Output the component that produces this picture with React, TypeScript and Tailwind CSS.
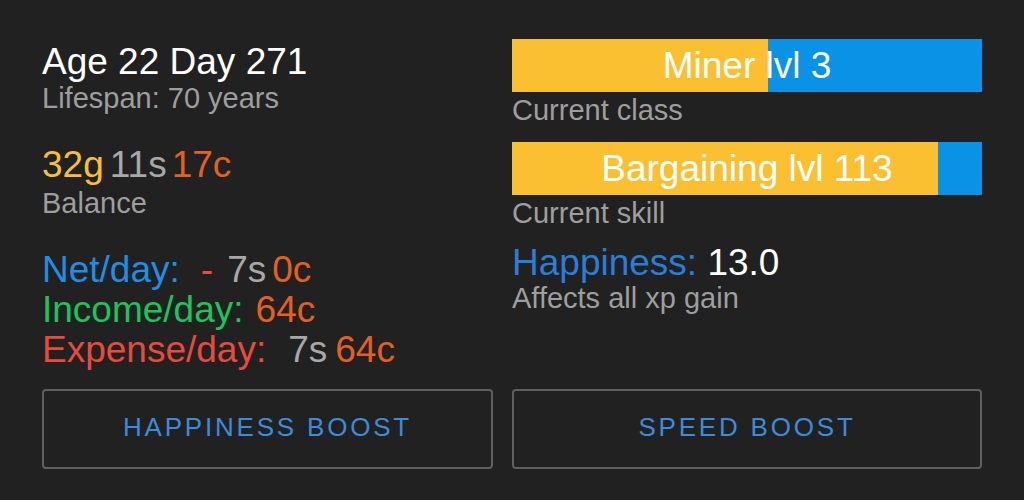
import React from "react";

const font = { fontFamily: '"Liberation Sans", Arial, sans-serif' };

function Bar({ label, pct }: { label: string; pct: number }) {
  return (
    <div className="relative h-[53px] w-full bg-[#0a93e6]">
      <div className="absolute inset-y-0 left-0 bg-[#fbbf32]" style={{ width: `${pct}%` }} />
      <div className="relative flex h-full items-center justify-center text-[37px] leading-[40px] text-white">
        {label}
      </div>
    </div>
  );
}

function BoostButton({ label }: { label: string }) {
  return (
    <button className="flex h-[80px] w-full items-center justify-center rounded-[4px] border-2 border-[#5f5f5f] bg-transparent pb-[4px] text-[26px] leading-[30px] tracking-[2.8px] text-[#3b8cdb]">
      {label}
    </button>
  );
}

export default function App() {
  return (
    <div className="h-[500px] w-[1024px] overflow-hidden bg-[#212121] px-[42px]" style={font}>
      <div className="grid grid-cols-[451px_470px] gap-x-[19px]">
        {/* left column: age, balance, daily flow */}
        <div className="flex flex-col pt-[42px]">
          <div className="text-[37px] leading-[40px] text-white">Age 22 Day 271</div>
          <div className="text-[29px] leading-[32px] text-[#9e9e9e]">Lifespan: 70 years</div>

          <div className="mt-[31px] text-[37px] leading-[40px] whitespace-nowrap">
            <span className="text-[#f6c030]">32g</span>
            <span className="ml-[6px] text-[#a8a8a8]">11s</span>
            <span className="ml-[5px] text-[#e5601a]">17c</span>
          </div>
          <div className="text-[29px] leading-[36px] text-[#9e9e9e]">Balance</div>

          <div className="mt-[29px] text-[37px] leading-[40px] whitespace-nowrap">
            <span className="text-[#1d8fe8]">Net/day:</span>
            <span className="ml-[21px] text-[#e84a3c]">-</span>
            <span className="ml-[14px] text-[#a8a8a8]">7s</span>
            <span className="ml-[6px] text-[#e5601a]">0c</span>
          </div>
          <div className="text-[37px] leading-[40px] whitespace-nowrap">
            <span className="text-[#1ec35a]">Income/day:</span>
            <span className="ml-[12px] text-[#e5601a]">64c</span>
          </div>
          <div className="text-[37px] leading-[40px] whitespace-nowrap">
            <span className="text-[#e84a3c]">Expense/day:</span>
            <span className="ml-[22px] text-[#a8a8a8]">7s</span>
            <span className="ml-[8px] text-[#e5601a]">64c</span>
          </div>
        </div>

        {/* right column: class, skill, happiness */}
        <div className="flex flex-col pt-[39px]">
          <Bar label="Miner lvl 3" pct={54.5} />
          <div className="mt-[2px] text-[29px] leading-[32px] text-[#9e9e9e]">Current class</div>

          <div className="mt-[16px]">
            <Bar label="Bargaining lvl 113" pct={90.6} />
          </div>
          <div className="mt-[2px] text-[29px] leading-[32px] text-[#9e9e9e]">Current skill</div>

          <div className="mt-[15px] text-[37px] leading-[38px] whitespace-nowrap">
            <span className="text-[#2a7dd8]">Happiness:</span>{" "}
            <span className="text-white">13.0</span>
          </div>
          <div className="text-[29px] leading-[32px] text-[#9e9e9e]">Affects all xp gain</div>
        </div>
      </div>

      <div className="mt-[19px] grid grid-cols-[451px_470px] gap-x-[19px]">
        <BoostButton label="HAPPINESS BOOST" />
        <BoostButton label="SPEED BOOST" />
      </div>
    </div>
  );
}
